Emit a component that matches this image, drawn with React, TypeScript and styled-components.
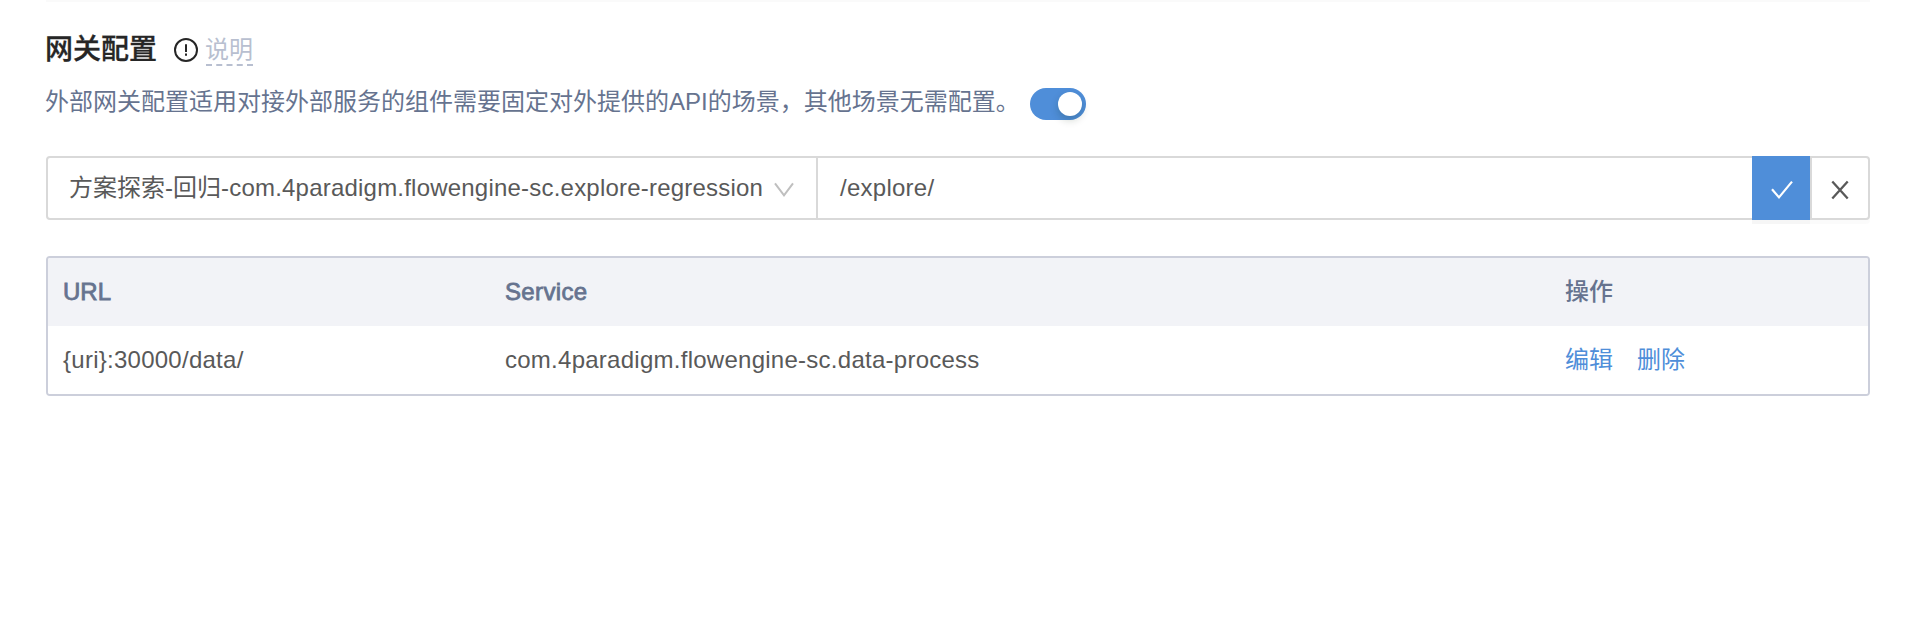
import React from "react";
import styled, { createGlobalStyle } from "styled-components";

const Global = createGlobalStyle`
  *, *::before, *::after { box-sizing: border-box; }
  body {
    margin: 0;
    background: #fff;
    color: #595959;
    font: 24px/36px "Liberation Sans", "Noto Sans CJK SC", sans-serif;
  }
`;

const Page = styled.main`
  height: 632px;
  padding: 0 46px;
  overflow: hidden;
`;

const Divider = styled.div`
  height: 2px;
  background: #fafafa;
`;

const TitleRow = styled.header`
  display: flex;
  align-items: center;
  height: 40px;
  margin: 28px 0 0 -1px;
`;

const Title = styled.h2`
  margin: 0 17px 0 0;
  color: #262626;
  font-size: 28px;
  line-height: 40px;
  font-weight: 500;
  -webkit-text-stroke: 0.3px currentColor;
`;

const InfoIcon = styled.svg`
  width: 24px;
  height: 24px;
  color: #262626;
`;

const HelpLink = styled.span`
  height: 34px;
  margin: 0 0 2px 8px;
  line-height: 36px;
  color: #b8bfd0;
  border-bottom: 2px dashed #b8bfd0;
  text-indent: -1px;
`;

const DescRow = styled.div`
  display: flex;
  align-items: center;
  height: 40px;
  margin: 14px 0 0 -1px;
`;

const Description = styled.p`
  margin: 0;
  padding-bottom: 4px;
  color: #66738f;
  white-space: nowrap;
`;

const Switch = styled.button`
  display: flex;
  align-items: center;
  justify-content: flex-end;
  width: 56px;
  height: 32px;
  margin: 0 0 0 10px;
  padding: 0 4px;
  border: 0;
  border-radius: 16px;
  background: #4f8ed9;
`;

const Knob = styled.span`
  width: 24px;
  height: 24px;
  border-radius: 50%;
  background: #fff;
  box-shadow: 0 4px 8px rgba(0, 35, 11, 0.2);
`;

const Editor = styled.div`
  display: flex;
  height: 64px;
  margin-top: 32px;
`;

const Select = styled.div`
  display: flex;
  align-items: center;
  justify-content: space-between;
  width: 772px;
  padding: 0 22px 0 21px;
  border: 2px solid #d9d9d9;
  border-radius: 4px 0 0 4px;
  white-space: nowrap;

  svg {
    margin-top: 4px;
  }
`;

const PathField = styled.div`
  display: flex;
  flex: 1;
  align-items: center;
  padding: 0 22px;
  border: solid #d9d9d9;
  border-width: 2px 0;
`;

const Latin = styled.span<{ $spacing?: number }>`
  letter-spacing: ${(p) => p.$spacing ?? 0.26}px;
`;

const ActionButton = styled.button<{ $primary?: boolean }>`
  display: flex;
  align-items: center;
  justify-content: center;
  width: ${(p) => (p.$primary ? 58 : 60)}px;
  padding: 4px 0 0 ${(p) => (p.$primary ? 2 : 0)}px;
  border: ${(p) => (p.$primary ? "0" : "2px solid #d9d9d9")};
  border-radius: ${(p) => (p.$primary ? "0" : "0 4px 4px 0")};
  background: ${(p) => (p.$primary ? "#4f8ed9" : "#fff")};
  color: ${(p) => (p.$primary ? "#fff" : "#595959")};
  box-shadow: 0 4px 0 rgba(0, 0, 0, ${(p) => (p.$primary ? 0.035 : 0.016)});
`;

const Table = styled.div`
  margin-top: 36px;
  border: 2px solid #cccfdb;
  border-radius: 4px;
  overflow: hidden;
`;

const Row = styled.div<{ $head?: boolean }>`
  display: grid;
  grid-template-columns: 442px 1060px 1fr;
  align-items: center;
  height: 68px;
  padding: 0 14px 0 15px;
  background: ${(p) => (p.$head ? "#f2f3f7" : "#fff")};
  color: ${(p) => (p.$head ? "#66738f" : "#595959")};
  font-weight: ${(p) => (p.$head ? 500 : 400)};
`;

const HeadLatin = styled.span<{ $spacing: number }>`
  letter-spacing: ${(p) => p.$spacing}px;
  -webkit-text-stroke: 0.8px currentColor;
`;

const Links = styled.div`
  display: flex;
  gap: 24px;
`;

const Link = styled.a`
  color: #4f8ed9;
`;

export default function App() {
  return (
    <Page>
      <Global />
      <Divider />
      <TitleRow>
        <Title>网关配置</Title>
        <InfoIcon viewBox="0 0 24 24" fill="none" stroke="currentColor" strokeWidth="2">
          <circle cx="12" cy="12" r="11" />
          <path d="M12 6.3v7.6M12 15.6v2.2" />
        </InfoIcon>
        <HelpLink>说明</HelpLink>
      </TitleRow>
      <DescRow>
        <Description>
          外部网关配置适用对接外部服务的组件需要固定对外提供的API的场景，其他场景无需配置。
        </Description>
        <Switch role="switch" aria-checked="true">
          <Knob />
        </Switch>
      </DescRow>
      <Editor>
        <Select>
          <span>
            方案探索-回归<Latin $spacing={0.21}>-com.4paradigm.flowengine-sc.explore-regression</Latin>
          </span>
          <svg width="20" height="16" viewBox="0 0 20 16" fill="none" stroke="#bfbfbf" strokeWidth="2">
            <path d="M1 1.3l9 12 9-12" />
          </svg>
        </Select>
        <PathField>
          <Latin>/explore/</Latin>
        </PathField>
        <ActionButton $primary aria-label="confirm">
          <svg width="24" height="20" viewBox="0 0 24 20" fill="none" stroke="currentColor" strokeWidth="2.2">
            <path d="M2 9.2l7 8.2L22 1.6" />
          </svg>
        </ActionButton>
        <ActionButton aria-label="cancel">
          <svg width="18" height="20" viewBox="0 0 18 20" fill="none" stroke="currentColor" strokeWidth="2.3">
            <path d="M1.3 1.5l15.4 17M16.7 1.5l-15.4 17" />
          </svg>
        </ActionButton>
      </Editor>
      <Table>
        <Row $head>
          <HeadLatin $spacing={0}>URL</HeadLatin>
          <HeadLatin $spacing={0.35}>Service</HeadLatin>
          <span>操作</span>
        </Row>
        <Row>
          <Latin>{"{uri}:30000/data/"}</Latin>
          <Latin>com.4paradigm.flowengine-sc.data-process</Latin>
          <Links>
            <Link>编辑</Link>
            <Link>删除</Link>
          </Links>
        </Row>
      </Table>
    </Page>
  );
}
